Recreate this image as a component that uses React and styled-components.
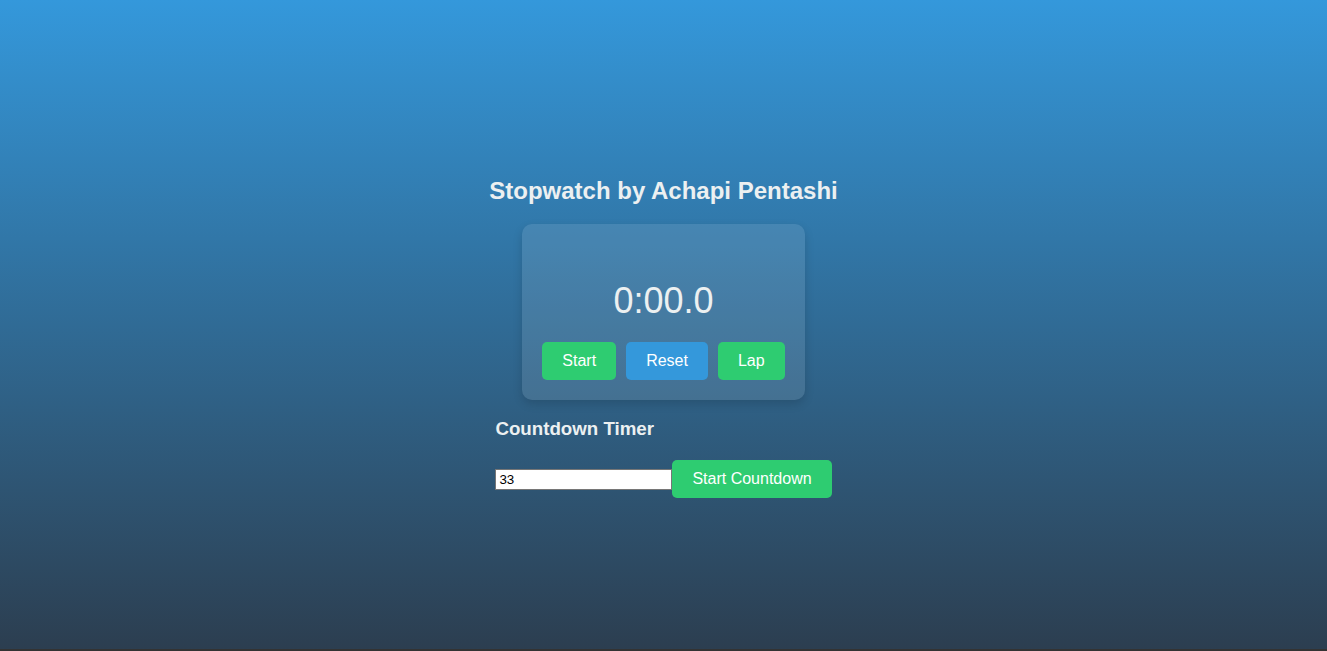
import React, { useState } from "react";
import styled, { createGlobalStyle } from "styled-components";

const GlobalStyle = createGlobalStyle`
  html, body {
    margin: 0;
    padding: 0;
    background: #333333;
  }
  body {
    font-family: "Liberation Sans", Arial, sans-serif;
  }
`;

const Page = styled.div`
  height: calc(100vh - 2px);
  background: linear-gradient(to bottom, #3498db, #2c3e50);
  color: #ecf0f1;
  display: flex;
  flex-direction: column;
  align-items: center;
  justify-content: center;
  padding-top: 26px;
  box-sizing: border-box;
`;

const Title = styled.h1`
  margin: 0 0 20px;
  font-size: 24px;
  font-weight: bold;
  line-height: 26px;
`;

const Card = styled.div`
  background: rgba(255, 255, 255, 0.1);
  border-radius: 10px;
  box-shadow: 0 4px 10px rgba(0, 0, 0, 0.15);
  padding: 20px;
  text-align: center;
`;

const Display = styled.div`
  font-size: 36px;
  line-height: 41px;
  margin: 36px 0 21px;
`;

const Buttons = styled.div`
  display: flex;
  gap: 10px;
`;

const Button = styled.button`
  border: none;
  border-radius: 5px;
  padding: 0 20px;
  height: 38px;
  font-family: "Liberation Sans", Arial, sans-serif;
  font-size: 16px;
  color: #ffffff;
  background: ${(p) => (p.$blue ? "#3498db" : "#2ecc71")};
  cursor: pointer;
`;

const Countdown = styled.div`
  margin-top: 18px;
  text-align: left;
`;

const SubTitle = styled.h3`
  margin: 0 0 20px;
  font-size: 18.72px;
  line-height: 22px;
  font-weight: bold;
`;

const Row = styled.div`
  display: flex;
  align-items: center;
`;

const Input = styled.input`
  width: 177px;
  height: 21px;
  box-sizing: border-box;
  border: 1px solid #767676;
  padding: 0 3px;
  font-family: "Liberation Sans", Arial, sans-serif;
  font-size: 13.33px;
  color: #000;
  background: #fff;
  margin-top: 1px;
  outline: none;
`;

export default function App() {
  const [value, setValue] = useState("33");
  return (
    <>
      <GlobalStyle />
      <Page>
        <Title>Stopwatch by Achapi Pentashi</Title>
        <Card>
          <Display>0:00.0</Display>
          <Buttons>
            <Button>Start</Button>
            <Button $blue>Reset</Button>
            <Button>Lap</Button>
          </Buttons>
        </Card>
        <Countdown>
          <SubTitle>Countdown Timer</SubTitle>
          <Row>
            <Input value={value} onChange={(e) => setValue(e.target.value)} />
            <Button>Start Countdown</Button>
          </Row>
        </Countdown>
      </Page>
    </>
  );
}
